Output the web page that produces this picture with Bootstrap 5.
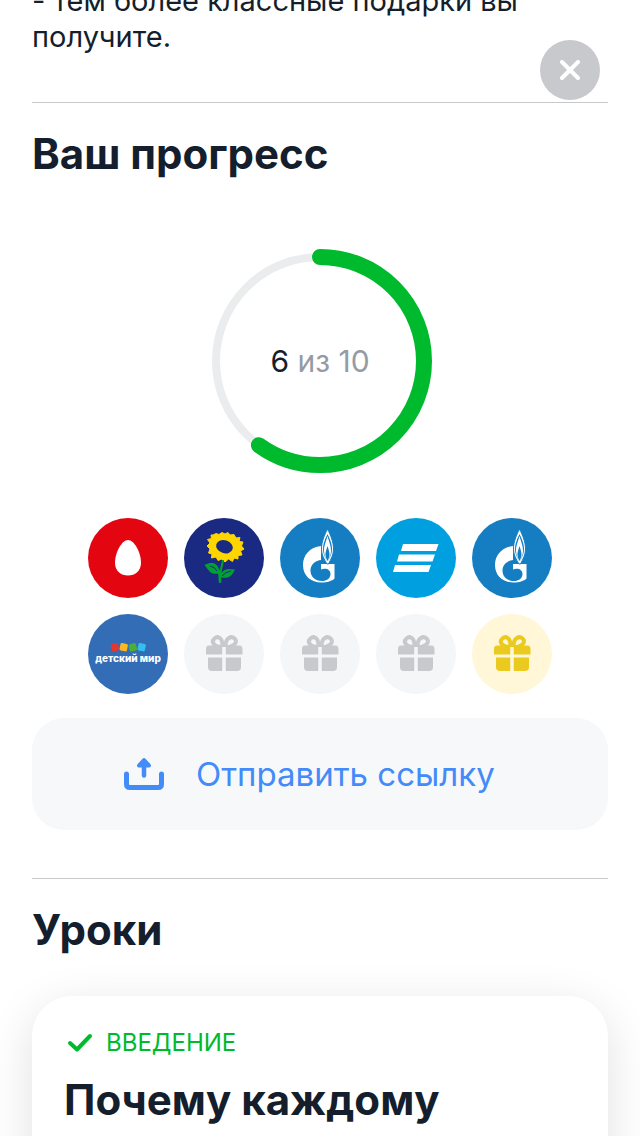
<!DOCTYPE html>
<html lang="ru">
<head>
<meta charset="utf-8">
<meta name="viewport" content="width=device-width, initial-scale=1">
<title>Ваш прогресс</title>
<link href="https://cdn.jsdelivr.net/npm/bootstrap@5.3.0/dist/css/bootstrap.min.css" rel="stylesheet">
<style>
  body { font-family: Inter, "Liberation Sans", sans-serif; color: #141e2c; background: #fff; }
  main { padding: 0 32px; }
  .intro-text { font-size: 29px; line-height: 36px; margin: -17px 0 47px; }
  .section-head { border-top: 1px solid #c8c9cb; padding-top: 23px; }
  .title-text { font-size: 42px; line-height: 56px; font-weight: 700; margin: 0; }
  .close-btn { width: 60px; height: 60px; top: 40px; right: 40px; background: #c8c9cd; z-index: 10; }
  .ring { width: 224px; height: 224px; margin: 67px auto 45px; }
  .ring-label { font-size: 30px; line-height: 36px; color: #959ba4; }
  .ring-label span { color: #141e2c; }
  .gifts { display: grid; grid-template-columns: repeat(5, 80px); gap: 16px; justify-content: center; margin: 0 0 24px; }
  .gifts li, .gifts svg { display: block; width: 80px; height: 80px; }
  .gift-gray { color: #c8c9cd; --disc: #f5f6f8; }
  .gift-gold { color: #ebca20; --disc: #fff7d8; }
  .share-btn { min-height: 112px; padding: 0 92px; gap: 32px; border-radius: 32px; background: #f7f8fa; color: #428bf9; font-size: 33px; font-weight: 400; line-height: 40px; margin-bottom: 48px; }
  .share-btn:hover { background: #eef0f3; color: #428bf9; }
  .lesson { border-radius: 40px; padding: 32px; min-height: 320px; margin-top: 38px; box-shadow: 0 12px 48px rgba(0, 0, 0, .12); color: inherit; }
  .lesson-tag { color: #00ba2d; font-size: 24px; font-weight: 400; line-height: 30px; gap: 10px; margin-bottom: 14px; }
</style>
</head>
<body class="vh-100 overflow-hidden">
<svg class="d-none" aria-hidden="true">
  <symbol id="gift" viewBox="0 0 80 80">
    <circle cx="40" cy="40" r="40" style="fill:var(--disc)"/>
    <g fill="none" stroke="currentColor" stroke-width="4">
      <path d="M38 33C30 33 27 28 30 25C33 21.500 39 23 38.500 33"/>
      <path d="M42 33C50 33 54 28 51 25C48 21.500 41 23 41.500 33"/>
    </g>
    <path fill="currentColor" d="M25 31.500H38.500V40.500H22V35Q22 31.500 25 31.500ZM41.500 31.500H55.500Q58.500 31.500 58.500 35V40.500H41.500ZM24 43.500H38.500V57H28Q24 57 24 53ZM41.500 43.500H57V53Q57 57 53 57H41.500Z"/>
    <path style="stroke:var(--disc)" stroke-width="3" d="M40 33V58"/>
  </symbol>
  <symbol id="gas" viewBox="0 0 80 80">
    <circle cx="40" cy="40" r="40" fill="#157ec3"/>
    <path fill="#fff" d="M41 28C30 29 23 37 23 47C23 58 31 64.500 41.500 64.500C47 64.500 52 63 54.500 60.500V46H41V51.500C46 49.500 50.500 51.500 50.500 56C50.500 60.500 46.500 63 42 63C35 63 30.500 58.500 30.500 52.500C30.500 46 36 42.500 41 42Z"/>
    <path fill="#fff" stroke="#157ec3" stroke-width="1" d="M47.500 11C44 18 41.500 24 41.500 31C41.500 37 44 41 47 46H48.500C51 41 53.500 37 53.500 31C53.500 24 51 18 47.500 11Z"/>
    <path fill="#157ec3" d="M47.500 16C44.500 22 43 26 43 31C43 36 45 39 47 43H48C50 39 52 36 52 31C52 26 50.500 22 47.500 16Z"/>
    <path fill="#fff" d="M47.500 18C46 24 44 27 44 33C44 37 45.500 40 47.500 44C49.500 40 51 37 51 33C51 27 49 24 47.500 18Z"/>
    <path fill="#157ec3" d="M47.500 28C46 33 45.500 34 45.500 37C45.500 39 46.500 41 47.500 43C48.500 41 49.500 39 49.500 37C49.500 34 49 33 47.500 28Z"/>
  </symbol>
</svg>

<button type="button" class="close-btn btn position-fixed rounded-circle border-0 p-0 d-flex align-items-center justify-content-center" aria-label="Закрыть">
  <svg width="20" height="20" viewBox="0 0 20 20" fill="none" stroke="#fff" stroke-width="4" stroke-linecap="round"><path d="M2 2L18 18M18 2L2 18"/></svg>
</button>

<main>
  <p class="intro-text">- тем более классные подарки вы<br>получите.</p>

  <section class="section-head">
    <h2 class="title-text">Ваш прогресс</h2>
    <div class="ring position-relative d-flex align-items-center justify-content-center">
      <svg class="position-absolute top-0 start-0" width="224" height="224" viewBox="0 0 224 224" fill="none" aria-hidden="true">
        <circle cx="112" cy="112" r="104" stroke="#ebeced" stroke-width="8"/>
        <circle cx="112" cy="112" r="104" stroke="#00ba2d" stroke-width="16" stroke-linecap="round" pathLength="10" stroke-dasharray="6 10" transform="rotate(-90 112 112)"/>
      </svg>
      <div class="ring-label"><span>6</span> из 10</div>
    </div>

    <ul class="gifts list-unstyled">
      <li><svg viewBox="0 0 80 80"><circle cx="40" cy="40" r="40" fill="#e30611"/><path fill="#fff" d="M40 22C46 22 53 34 53 45C53 53 47 57.500 40 57.500C33 57.500 27 53 27 45C27 34 34 22 40 22Z"/></svg></li>
      <li><svg viewBox="0 0 80 80"><circle cx="40" cy="40" r="40" fill="#1a2982"/>
        <path fill="#ffd500" d="M29 17L32 15.500L35 16.500L38 14.500L41 16L44 14.500L46 17L50 16.500L52 20L56 19.500L55 23.500L59 24L57.500 28L60 31L56.500 33L58 37L54 37.500L54 41L50 40L48.500 43.500L44.500 41L41 44L38 41L34 42.500L32 39L27.500 40L28 36L24.500 35L26 31L23 28L26 25L23.500 21.500L27.500 20.500L27 17Z" stroke="#ffd500" stroke-width="1" stroke-linejoin="round"/>
        <ellipse cx="40.500" cy="28.500" rx="8.500" ry="6.500" transform="rotate(18 40 28.500)" fill="#1a2982"/>
        <g fill="#00a031"><path d="M38 42H40C39 48 38 51 37.500 55C41 50 45 51 51 51.500C48 57 46 61 37 59.500L37.500 64.500L35 65C34 61 35 59 34 55.500C27 57 25 53 20.500 47C28 43 34 45 35.500 53Z"/></g>
        <path fill="none" stroke="#1a2982" stroke-width="1" d="M26 48Q31 49 33 53M47 53Q41 54 38 58"/></svg></li>
      <li><svg><use href="#gas"/></svg></li>
      <li><svg viewBox="0 0 80 80"><circle cx="40" cy="40" r="40" fill="#00a0e0"/><path fill="#fff" d="M27 26H62.500L60 33H25ZM23 36.500H59L56.500 43.500H21ZM19 47H55L52.500 54H17Z"/></svg></li>
      <li><svg><use href="#gas"/></svg></li>
      <li><svg viewBox="0 0 80 80"><circle cx="40" cy="40" r="40" fill="#336db6"/>
        <rect x="23" y="29.500" width="7.500" height="7.500" rx="1.500" fill="#e7362c" transform="rotate(-12 27 33)"/>
        <rect x="32" y="29.500" width="7.500" height="7.500" rx="1.500" fill="#fdb924" transform="rotate(12 36 33)"/>
        <rect x="41" y="29.500" width="7.500" height="7.500" rx="1.500" fill="#4eae34" transform="rotate(-14 45 33)"/>
        <rect x="50" y="29.500" width="7.500" height="7.500" rx="1.500" fill="#35bdf0" transform="rotate(12 54 33)"/>
        <text x="40" y="48" text-anchor="middle" font-size="10" font-weight="800" fill="#fff">детский мир</text></svg></li>
      <li><svg class="gift-gray"><use href="#gift"/></svg></li>
      <li><svg class="gift-gray"><use href="#gift"/></svg></li>
      <li><svg class="gift-gray"><use href="#gift"/></svg></li>
      <li><svg class="gift-gold"><use href="#gift"/></svg></li>
    </ul>

    <button type="button" class="share-btn btn border-0 w-100 d-flex align-items-center text-nowrap">
      <svg class="flex-shrink-0" width="40" height="34" viewBox="0 0 40 34" fill="none" stroke="currentColor" stroke-linecap="round" stroke-linejoin="round" aria-hidden="true"><path stroke-width="5" d="M2.500 17V27Q2.500 30.500 6 30.500H34Q37.500 30.500 37.500 27V17"/><path stroke-width="4.500" d="M20 5V18.500"/><path fill="currentColor" stroke-width="4" d="M20 3L15 8.500H25Z"/></svg>
      <span>Отправить ссылку</span>
    </button>
  </section>

  <section class="section-head">
    <h2 class="title-text">Уроки</h2>
    <article class="lesson card border-0">
      <div class="lesson-tag d-flex align-items-center">
        <svg width="32" height="30" viewBox="0 0 32 30" fill="none" stroke="currentColor" stroke-width="4" stroke-linecap="round" stroke-linejoin="round" aria-hidden="true"><path d="M6 15L13 21.500L26 8"/></svg>
        <span>ВВЕДЕНИЕ</span>
      </div>
      <h3 class="title-text">Почему каждому</h3>
    </article>
  </section>
</main>
<script src="https://cdn.jsdelivr.net/npm/bootstrap@5.3.0/dist/js/bootstrap.bundle.min.js"></script>
</body>
</html>
